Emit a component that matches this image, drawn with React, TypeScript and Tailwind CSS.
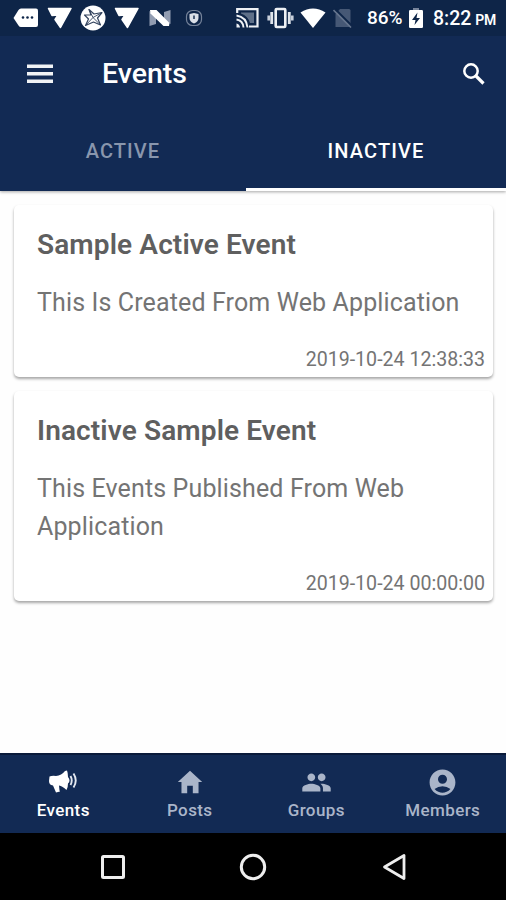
import { ReactNode } from "react";
import { IoMdHome } from "react-icons/io";
import { MdAccountCircle, MdPeople } from "react-icons/md";
import clsx from "clsx";

const events = [
  {
    title: "Sample Active Event",
    body: "This Is Created From Web Application",
    date: "2019-10-24 12:38:33",
  },
  {
    title: "Inactive Sample Event",
    body: "This Events Published From Web Application",
    date: "2019-10-24 00:00:00",
  },
];

const ArrowMark = () => (
  <svg viewBox="0 0 26 24" className="h-6 w-[26px]" fill="currentColor">
    <path
      d="M1.500 2.500H24L13.500 21.500L8 13.500L11 9L5 9.500Z"
      stroke="currentColor"
      strokeWidth="1.500"
      strokeLinejoin="round"
    />
  </svg>
);

const MessageTag = () => (
  <svg viewBox="0 0 26 20" className="h-5 w-[26px]">
    <path
      d="M8 0.500H23Q25 0.500 25 2.500V17Q25 19 23 19H8Q6.500 19 5.500 17.500L0.500 10L5.500 2Q6.500 0.500 8 0.500Z"
      fill="white"
    />
    <g fill="#0e2548">
      <circle cx="10" cy="9.500" r="1.300" />
      <circle cx="14.500" cy="9.500" r="1.300" />
      <circle cx="19" cy="9.500" r="1.300" />
    </g>
  </svg>
);

const StarBadge = () => (
  <svg viewBox="0 0 26 26" className="size-[26px]">
    <circle cx="13" cy="13" r="12.500" fill="white" />
    <path
      d="M9 4.500L14 9L22 7.500L17.500 13L20.500 20L13.500 17L5.500 20.500L8.500 14L4.500 10L11 10Z"
      fill="none"
      stroke="#34445f"
      strokeWidth="1.200"
      strokeLinejoin="round"
    />
    <path
      d="M9 4.500L13 12.500L22 7.500M20.500 20L13 12.500L5.500 20.500"
      fill="none"
      stroke="#34445f"
      strokeWidth="0.900"
    />
  </svg>
);

const NougatMark = () => (
  <svg viewBox="0 0 22 18" className="h-[18px] w-[22px]">
    <path d="M0.500 2L7 6V15L0.500 17Z" fill="#929db2" />
    <path d="M15 3L21.500 1V15L15 11Z" fill="#929db2" />
    <path d="M1 1H7.500L20.500 14L20 17H14.500L1.500 4.500Z" fill="white" />
  </svg>
);

const ShieldMark = () => (
  <svg viewBox="0 0 18 18" className="size-[18px]" fill="none">
    <rect
      x="1.500"
      y="1.500"
      width="15"
      height="15"
      rx="6"
      stroke="#75839a"
      strokeWidth="1.200"
    />
    <path
      d="M9 4L13.500 5V9Q13.500 12.500 9 14.500Q4.500 12.500 4.500 9V5Z"
      fill="#dbe0e8"
    />
    <path d="M9 6.500V10" stroke="#0e2548" strokeWidth="1.400" />
  </svg>
);

const CastIcon = () => (
  <svg viewBox="0 0 23 20" className="h-5 w-[23px]" fill="none">
    <path
      d="M1.200 5V1.200H21.500V18.500H13"
      stroke="#eef1f5"
      strokeWidth="2.200"
    />
    <path d="M5 4.500H18V15H14Q12 8 5 5.500Z" fill="#5f7089" />
    <path
      d="M0.500 7.500Q10.500 9 11.500 19.500M0.500 11.500Q7 12.500 7.500 19.500"
      stroke="#eef1f5"
      strokeWidth="1.900"
    />
    <path d="M0.500 15.500Q3.500 16 4 19.500H0.500Z" fill="#eef1f5" />
  </svg>
);

const VibrateIcon = () => (
  <svg viewBox="0 0 27 22" className="h-[22px] w-[27px]" fill="none">
    <rect
      x="8.700"
      y="2"
      width="9.600"
      height="18"
      rx="1"
      stroke="#eef1f5"
      strokeWidth="2.600"
    />
    <path d="M4.700 5V17M22.300 5V17" stroke="#dfe4eb" strokeWidth="2.800" />
    <path
      d="M1.700 8.500V13.500M25.300 8.500V13.500"
      stroke="#c9d0dc"
      strokeWidth="2.600"
    />
  </svg>
);

const WifiIcon = () => (
  <svg viewBox="0 0 26 20" className="h-5 w-[26px]" fill="white">
    <path d="M0.500 4.500Q13 -3.500 25.500 4.500L13 20Z" />
  </svg>
);

const NoSimIcon = () => (
  <svg viewBox="0 0 20 20" className="size-5">
    <path d="M7 1H16Q17.500 1 17.500 2.500V19H2.500V6Z" fill="#465875" />
    <path d="M1.500 0.500L19.500 18.500" stroke="#0e2548" strokeWidth="2" />
    <path d="M0.500 2L18 19.500" stroke="#66758e" strokeWidth="1.600" />
  </svg>
);

const BatteryIcon = () => (
  <svg viewBox="0 0 14 20" className="h-5 w-3.5">
    <path d="M4 0H10V2H4Z" fill="#77849b" />
    <rect y="2" width="14" height="18" rx="1.200" fill="white" />
    <path d="M8.500 4.500L3 12H6.500L5.500 17L11 10H7.500Z" fill="#0e2548" />
  </svg>
);

const MenuIcon = () => (
  <svg viewBox="0 0 26 20" className="h-5 w-[26px]" fill="#f1f3f6">
    <rect y="0.500" width="26" height="3.500" />
    <rect y="8" width="26" height="3.500" />
    <rect y="15.500" width="26" height="3.500" />
  </svg>
);

const SearchIcon = () => (
  <svg
    viewBox="0 0 22 22"
    className="size-[22px]"
    fill="none"
    stroke="currentColor"
  >
    <circle cx="8" cy="8" r="6.700" strokeWidth="2.500" />
    <path d="M12.500 12.500L20.500 20.500" strokeWidth="3.200" />
  </svg>
);

const MegaphoneIcon = () => (
  <svg viewBox="0 0 30 24" className="h-6 w-[30px]">
    <path
      d="M1.500 6.500Q4 5.500 8 6Q13.500 5.500 17 1L19 0.500Q20 3 20 7Q21.500 8.500 21.500 10.500Q21.500 12.500 20 13.500Q20 17.500 18.500 20Q14.500 16 11 15.500L11.500 20.500L12 21.500L8 22.500L5 15.500Q1 15 1 11Z"
      fill="white"
    />
    <path
      d="M22.500 6Q25 10.500 22.500 15M25.500 3.500Q30 10.500 25.500 17.500"
      fill="none"
      stroke="#e3e8f0"
      strokeWidth="1.900"
    />
  </svg>
);

const StatusBar = () => (
  <div className="flex h-9 items-center justify-between bg-[#0e2548] pr-2.5 pl-[13px]">
    <div className="flex items-center gap-[7.5px]">
      <MessageTag />
      <ArrowMark />
      <StarBadge />
      <ArrowMark />
      <div className="flex w-[26px] justify-center">
        <NougatMark />
      </div>
      <div className="flex w-[26px] justify-center">
        <ShieldMark />
      </div>
    </div>
    <div className="flex items-center text-white">
      <CastIcon />
      <span className="ml-[8px]">
        <VibrateIcon />
      </span>
      <span className="ml-[6px]">
        <WifiIcon />
      </span>
      <span className="ml-[7px]">
        <NoSimIcon />
      </span>
      <span className="ml-[14px] w-[37px] text-[19px] font-medium whitespace-nowrap">
        86%
      </span>
      <span className="ml-[5px]">
        <BatteryIcon />
      </span>
      <span className="ml-[10px] pt-px text-[19.5px] font-medium">8:22</span>
      <span className="ml-1 pt-1 text-[14px] font-semibold tracking-[-0.3px]">
        PM
      </span>
    </div>
  </div>
);

const Header = () => (
  <header className="relative z-10 bg-[#122a54] text-white shadow-[0_1px_3px_rgba(0,0,0,0.35)]">
    <StatusBar />
    <div className="flex h-[76px] items-center pr-[21px] pl-[27px]">
      <MenuIcon />
      <h1 className="ml-[49px] pt-px text-[28.5px] font-medium">Events</h1>
      <span className="ml-auto">
        <SearchIcon />
      </span>
    </div>
    <div className="flex h-[79px] text-[20px] font-medium">
      <div className="flex w-[246px] items-center justify-center pb-px tracking-[1.1px] text-[#8996ad]">
        ACTIVE
      </div>
      <div className="flex flex-1 items-center justify-center border-b-[3px] border-white pt-0.5 tracking-[1.1px]">
        INACTIVE
      </div>
    </div>
  </header>
);

type EventCardProps = { title: string; body: string; date: string };

const EventCard = ({ title, body, date }: EventCardProps) => (
  <article className="rounded-[5px] bg-white pt-[21px] pr-2 pb-[7px] pl-[23px] shadow-[0_2px_3px_rgba(0,0,0,0.35)]">
    <h2 className="text-[28px] leading-[38px] font-semibold tracking-[0.12px] text-[#5f5f5f]">
      {title}
    </h2>
    <p className="mt-5 pr-4 text-[25px] leading-[38px] tracking-[0.13px] text-[#747474]">
      {body}
    </p>
    <p className="mt-7 text-right text-[19.6px] leading-5 text-[#747474]">
      {date}
    </p>
  </article>
);

type NavItemProps = { label: string; icon: ReactNode; active?: boolean };

const NavItem = ({ label, icon, active }: NavItemProps) => (
  <div
    className={clsx(
      "flex flex-1 flex-col items-center pt-3",
      active ? "text-white" : "text-[#aab5c9]"
    )}
  >
    <div className="flex h-[30px] items-center">{icon}</div>
    <span className="mt-0.5 text-[17px] leading-[22px] font-medium tracking-[0.4px]">
      {label}
    </span>
  </div>
);

const App = () => {
  return (
    <div className="flex h-[900px] w-[506px] flex-col overflow-hidden bg-white font-[Roboto,sans-serif]">
      <Header />

      <main className="flex flex-1 flex-col gap-3.5 bg-[#fefefe] pt-3.5 pr-[13px] pl-3.5">
        {events.map((event) => (
          <EventCard key={event.title} {...event} />
        ))}
      </main>

      {/* Bottom tabs */}
      <nav className="flex h-20 border-t-2 border-[#0a1a3a] bg-[#122a54]">
        <NavItem label="Events" icon={<MegaphoneIcon />} active />
        <NavItem label="Posts" icon={<IoMdHome className="size-[30px]" />} />
        <NavItem label="Groups" icon={<MdPeople className="size-[31px]" />} />
        <NavItem
          label="Members"
          icon={<MdAccountCircle className="size-[31px]" />}
        />
      </nav>

      {/* System navigation */}
      <div className="flex h-[67px] items-center justify-between bg-black px-[100px]">
        <svg viewBox="0 0 26 26" className="size-[26px]" fill="none">
          <rect
            x="2.500"
            y="2.500"
            width="21"
            height="21"
            rx="1"
            stroke="#eee"
            strokeWidth="3"
          />
        </svg>
        <svg viewBox="0 0 28 28" className="size-7" fill="none">
          <circle cx="14" cy="14" r="11.700" stroke="#eee" strokeWidth="3" />
        </svg>
        <svg viewBox="0 0 26 28" className="h-7 w-[26px]" fill="none">
          <path
            d="M4.500 14L24 2.500V25.500Z"
            stroke="#eee"
            strokeWidth="2.800"
            strokeLinejoin="round"
          />
        </svg>
      </div>
    </div>
  );
};

export default App;
